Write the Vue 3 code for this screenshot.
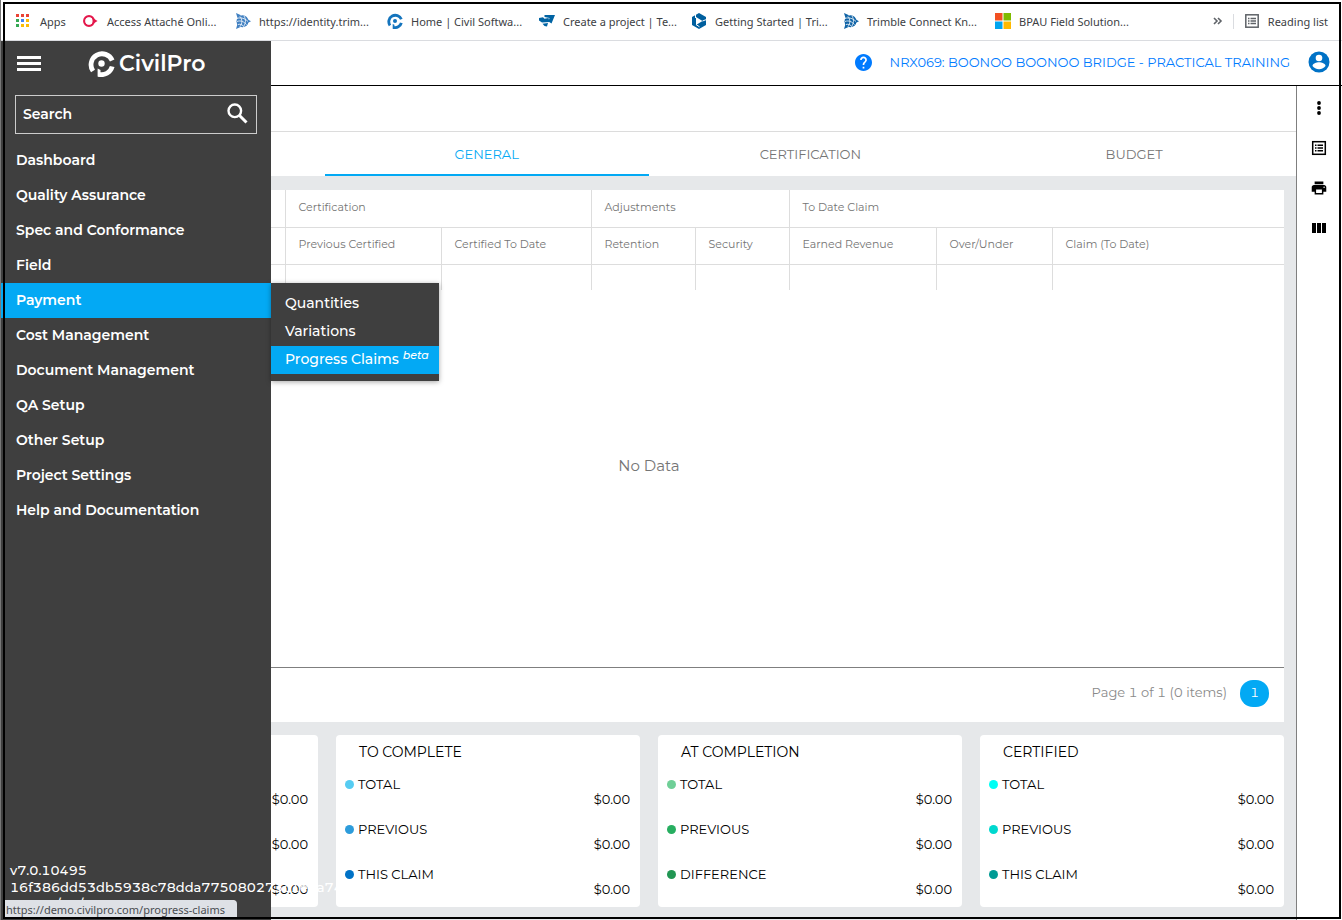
<script setup>
import { ref } from 'vue'

const bookmarks = [
  { icon: 'apps', text: 'Apps' },
  { icon: 'attache', text: 'Access Attaché Onli...' },
  { icon: 'globe', text: 'https://identity.trim...', color: '#3f7fc1' },
  { icon: 'civil', text: 'Home | Civil Softwa...' },
  { icon: 'tekla', text: 'Create a project | Te...' },
  { icon: 'connect', text: 'Getting Started | Tri...' },
  { icon: 'globe', text: 'Trimble Connect Kn...', color: '#0f63a6' },
  { icon: 'windows', text: 'BPAU Field Solution...' }
]
const appColors = ['#ea4335', '#ea4335', '#ea4335', '#34a853', '#4285f4', '#fbbc05', '#34a853', '#fbbc05', '#fbbc05']

const menu = [
  'Dashboard', 'Quality Assurance', 'Spec and Conformance', 'Field', 'Payment', 'Cost Management',
  'Document Management', 'QA Setup', 'Other Setup', 'Project Settings', 'Help and Documentation'
]
const submenu = [
  { text: 'Quantities' },
  { text: 'Variations' },
  { text: 'Progress Claims', badge: 'beta', active: true }
]
const tabs = ['GENERAL', 'CERTIFICATION', 'BUDGET']
const activeTab = ref('GENERAL')
const search = ref('')

const groups = [
  { text: 'Certification', span: 2 },
  { text: 'Adjustments', span: 2 },
  { text: 'To Date Claim', span: 3 }
]
const columns = ['Previous Certified', 'Certified To Date', 'Retention', 'Security', 'Earned Revenue', 'Over/Under', 'Claim (To Date)']

const cards = [
  { title: '', rows: [{ value: '$0.00' }, { value: '$0.00' }, { value: '$0.00' }] },
  {
    title: 'TO COMPLETE',
    rows: [
      { label: 'TOTAL', color: '#56ccf2', value: '$0.00' },
      { label: 'PREVIOUS', color: '#2d9cdb', value: '$0.00' },
      { label: 'THIS CLAIM', color: '#0072c6', value: '$0.00' }
    ]
  },
  {
    title: 'AT COMPLETION',
    rows: [
      { label: 'TOTAL', color: '#6fcf97', value: '$0.00' },
      { label: 'PREVIOUS', color: '#27ae60', value: '$0.00' },
      { label: 'DIFFERENCE', color: '#219653', value: '$0.00' }
    ]
  },
  {
    title: 'CERTIFIED',
    rows: [
      { label: 'TOTAL', color: '#00fff5', value: '$0.00' },
      { label: 'PREVIOUS', color: '#00d8cf', value: '$0.00' },
      { label: 'THIS CLAIM', color: '#009b95', value: '$0.00' }
    ]
  }
]
</script>

<template>
  <div class="app">
    <nav class="bookmarks" aria-label="Bookmarks">
      <a v-for="b in bookmarks" :key="b.text" href="#" class="bookmark" :class="{ apps: b.icon === 'apps' }">
        <svg v-if="b.icon === 'apps'" width="16" height="16" viewBox="0 0 16 16">
          <rect v-for="(c, i) in appColors" :key="i" :x="(i % 3) * 5" :y="1 + Math.floor(i / 3) * 5" width="3" height="3" :fill="c" />
        </svg>
        <svg v-else-if="b.icon === 'attache'" width="16" height="16" viewBox="0 0 16 16">
          <circle cx="6" cy="8" r="4.800" fill="none" stroke="#e4174b" stroke-width="2.300" />
          <path d="M9 4.500 14.500 8 9 11.500z" fill="#e4174b" />
          <circle cx="6" cy="8" r="3.600" fill="#fff" />
        </svg>
        <svg v-else-if="b.icon === 'globe'" width="16" height="16" viewBox="0 0 16 16">
          <path d="M1 0l5 2.300L2.500 5zM1 16l4.500-2L2.500 11zM12 6l4 2.300-4 2z" :fill="b.color" />
          <circle cx="7.500" cy="8.200" r="6" :fill="b.color" />
          <g fill="none" stroke="#fff" stroke-width=".8">
            <path d="M2 5.500c4-1.500 8 0 11 3M2 8.500c4-1.500 7 .3 9.500 3M3 11.500c2.500-.8 4.500.3 6 2.200" />
            <path d="M5 3.500c2.500 3 2.500 7 0 10M9 3c2 3 2 7.500-.5 10.500" />
          </g>
        </svg>
        <svg v-else-if="b.icon === 'civil'" width="16" height="16" viewBox="0 0 27 27">
          <g fill="none" stroke="#1474bd" stroke-width="4.800">
            <path d="M5 21A11 11 0 1 1 24.200 10.500" />
            <path d="M24.200 16.500A11 11 0 0 1 10.500 24.200" />
          </g>
          <path d="M9.600 18.500 12.500 20v7l-2.900-.6z" fill="#1474bd" />
          <circle cx="13.500" cy="13.500" r="3.400" fill="#1474bd" />
        </svg>
        <svg v-else-if="b.icon === 'tekla'" width="16" height="16" viewBox="0 0 16 16" fill="#0063a3">
          <path d="M5.500 2H16l-3.500 8.500L9.500 8.500l1-3.500-5-1z" />
          <path d="M0 5l4-.8 1.500 1.600 4-.8 1 4L3 9.500 0 7.500z" />
          <path d="M3.500 10.700l5.500-.7-1 3.500-2.500-.5z" />
        </svg>
        <svg v-else-if="b.icon === 'connect'" width="16" height="16" viewBox="0 0 16 16">
          <path d="M8 0l7 4v8l-7 4-7-4V4z" fill="#005f9e" />
          <path d="M5 4 11.500 8 5 12z" fill="#fff" />
          <path d="M4.500 1v4M5 11.500l3.500 2.300M15.500 6.500l-4 1.500" stroke="#fff" stroke-width="1" />
        </svg>
        <svg v-else width="16" height="16" viewBox="0 0 16 16">
          <path d="M0 0h7.500v7.500H0z" fill="#f25022" />
          <path d="M8.500 0H16v7.500H8.500z" fill="#7fba00" />
          <path d="M0 8.500h7.500V16H0z" fill="#00a4ef" />
          <path d="M8.500 8.500H16V16H8.500z" fill="#ffb900" />
        </svg>
        <span>{{ b.text }}</span>
      </a>
      <span class="bar-end">
        <button class="icon-button" aria-label="More bookmarks">
          <svg width="10" height="8" viewBox="0 0 10 8" fill="none" stroke="#5f6368" stroke-width="1.600"><path d="M1 1l3 3-3 3M5 1l3 3-3 3" /></svg>
        </button>
        <a href="#" class="reading">
          <svg width="14" height="14" viewBox="0 0 14 14" fill="none" stroke="#5f6368">
            <rect x=".8" y=".8" width="12.400" height="12.400" stroke-width="1.500" />
            <path d="M3 4.500h1.500M3 7h1.500M3 9.500h1.500M5.500 4.500H11M5.500 7H11M5.500 9.500H11" stroke-width="1.300" />
          </svg>
          <span>Reading list</span>
        </a>
      </span>
    </nav>

    <div class="page">
      <header class="topbar">
        <button class="icon-button" aria-label="Help">
          <svg width="17" height="17" viewBox="2 2 20 20" fill="#007bff">
            <path d="M12 2C6.480 2 2 6.480 2 12s4.480 10 10 10 10-4.480 10-10S17.520 2 12 2zm1 17h-2v-2h2v2zm2.070-7.750l-.9.920C13.450 12.900 13 13.500 13 15h-2v-.5c0-1.100.45-2.100 1.170-2.830l1.240-1.260c.37-.36.59-.86.59-1.410 0-1.100-.9-2-2-2s-2 .9-2 2H8c0-2.210 1.790-4 4-4s4 1.790 4 4c0 .88-.36 1.680-.93 2.250z" />
          </svg>
        </button>
        <a href="#" class="project">NRX069: BOONOO BOONOO BRIDGE - PRACTICAL TRAINING</a>
        <button class="icon-button" aria-label="Account">
          <svg width="22" height="22" viewBox="0 0 22 22">
            <circle cx="11" cy="11" r="10.500" fill="#0072c6" />
            <circle cx="11" cy="7" r="3.300" fill="#fff" />
            <path d="M4.500 15c0-2.600 4-3.700 6.500-3.700s6.500 1.100 6.500 3.700c-1.300 2-3.700 3.200-6.500 3.200S5.800 17 4.500 15z" fill="#fff" />
          </svg>
        </button>
      </header>

      <div class="workspace">
        <main class="main">
          <div class="toolbar"></div>
          <div class="tabs" role="tablist">
            <button v-for="t in tabs" :key="t" role="tab" class="tab" :class="{ active: t === activeTab }" :aria-selected="t === activeTab" @click="activeTab = t">{{ t }}</button>
          </div>

          <div class="content">
            <section class="grid">
              <table>
                <colgroup>
                  <col class="w271"><col class="w156"><col class="w150"><col class="w104"><col class="w94"><col class="w147"><col class="w116"><col>
                </colgroup>
                <thead>
                  <tr>
                    <td></td>
                    <th v-for="g in groups" :key="g.text" :colspan="g.span" scope="colgroup">{{ g.text }}</th>
                  </tr>
                  <tr>
                    <td></td>
                    <th v-for="c in columns" :key="c" scope="col">{{ c }}</th>
                  </tr>
                </thead>
                <tbody>
                  <tr><td v-for="n in 8" :key="n"></td></tr>
                </tbody>
              </table>
              <p class="empty">No Data</p>
              <footer class="pager">
                <span>Page 1 of 1 (0 items)</span>
                <button class="page-number">1</button>
              </footer>
            </section>

            <section class="cards">
              <article v-for="(card, i) in cards" :key="i" class="card">
                <h2>{{ card.title }}</h2>
                <dl>
                  <div v-for="(r, j) in card.rows" :key="j">
                    <dt><template v-if="r.label"><i :style="{ background: r.color }"></i>{{ r.label }}</template></dt>
                    <dd>{{ r.value }}</dd>
                  </div>
                </dl>
              </article>
            </section>
          </div>
        </main>

        <aside class="rail">
          <button class="icon-button" aria-label="More actions">
            <svg width="16" height="16" viewBox="0 0 16 16"><circle cx="8" cy="3" r="1.900" /><circle cx="8" cy="8" r="1.900" /><circle cx="8" cy="13" r="1.900" /></svg>
          </button>
          <button class="icon-button" aria-label="Details">
            <svg width="16" height="16" viewBox="0 0 16 16" fill="none" stroke="#000">
              <rect x="1.700" y="1.700" width="12.600" height="12.600" stroke-width="1.500" />
              <path d="M4 5.300h1.500M4 8h1.500M4 10.700h1.500M6.500 5.300H12M6.500 8H12M6.500 10.700H12" stroke-width="1.400" />
            </svg>
          </button>
          <button class="icon-button" aria-label="Print">
            <svg width="16" height="16" viewBox="1 1 22 22"><path d="M19 8H5c-1.660 0-3 1.340-3 3v6h4v4h12v-4h4v-6c0-1.660-1.340-3-3-3zm-3 11H8v-5h8v5zm3-7c-.55 0-1-.45-1-1s.45-1 1-1 1 .45 1 1-.45 1-1 1zm-1-9H6v4h12V3z" /></svg>
          </button>
          <button class="icon-button" aria-label="Columns">
            <svg width="16" height="16" viewBox="0 0 16 16"><path d="M1 3h4v10H1zM6 3h4v10H6zM11 3h4v10h-4z" /></svg>
          </button>
        </aside>
      </div>

      <aside class="sidebar">
        <div class="brand-row">
          <button class="icon-button" aria-label="Toggle menu">
            <svg width="24" height="16" viewBox="0 0 24 16" fill="#fff"><path d="M0 0h24v3H0zM0 6h24v3H0zM0 12h24v3H0z" /></svg>
          </button>
          <a href="#" class="brand">
            <svg width="27" height="27" viewBox="0 0 27 27" fill="#fff">
              <g fill="none" stroke="#fff" stroke-width="4.800">
                <path d="M5 21A11 11 0 1 1 24.200 10.500" />
                <path d="M24.200 16.500A11 11 0 0 1 10.500 24.200" />
              </g>
              <path d="M9.600 18.500 12.500 20v7l-2.900-.6z" />
              <circle cx="13.500" cy="13.500" r="3.200" />
            </svg>
            <span>CivilPro</span>
          </a>
        </div>
        <label class="search">
          <input v-model="search" type="text" placeholder="Search" aria-label="Search">
          <svg width="21" height="21" viewBox="0 0 21 21" fill="none" stroke="#fff"><circle cx="7.800" cy="7.800" r="6.300" stroke-width="2.400" /><path d="M12.500 12.500l7 7" stroke-width="3" /></svg>
        </label>
        <ul class="menu">
          <li v-for="m in menu" :key="m">
            <a href="#" :class="{ active: m === 'Payment' }">{{ m }}</a>
            <ul v-if="m === 'Payment'" class="submenu">
              <li v-for="s in submenu" :key="s.text">
                <a href="#" :class="{ active: s.active }">{{ s.text }} <em v-if="s.badge">{{ s.badge }}</em></a>
              </li>
            </ul>
          </li>
        </ul>
        <div class="version">
          <div>v7.0.10495</div>
          <div>16f386dd53db5938c78dda775080273c1e0a74</div>
          <div>Tue 09/30/2021 10:07:57.05 UTC</div>
        </div>
      </aside>
    </div>

    <div class="status">https://demo.civilpro.com/progress-claims</div>
    <div class="frame"></div>
  </div>
</template>

<style>
body { margin: 0; background: #fff; }
</style>

<style scoped>
* { box-sizing: border-box; }
.app {
  display: flex;
  flex-direction: column;
  min-height: 100vh;
  position: relative;
  overflow: hidden;
  border-left: 1px solid #777;
  font-family: Montserrat, Inter, "Liberation Sans", sans-serif;
  font-size: 13px;
  color: #000;
}
a { color: inherit; text-decoration: none; }
svg { display: block; flex: none; }
ul, dl, dd, h2, p { margin: 0; padding: 0; }
ul { list-style: none; }
button { font: inherit; color: inherit; border: 0; background: none; padding: 0; cursor: pointer; }
.icon-button { display: grid; place-items: center; }

.bookmarks {
  display: flex;
  align-items: center;
  height: 41px;
  padding: 3px 14px 1px 15px;
  border-bottom: 1px solid #dadce0;
  font-family: "Noto Sans", "Open Sans", sans-serif;
  font-size: 11px;
  color: #3c4043;
  white-space: nowrap;
}
.bookmark { display: flex; align-items: center; gap: 8px; flex: 0 0 152px; }
.bookmark.apps { flex-basis: 67px; }
.bar-end { display: flex; align-items: center; gap: 10px; margin-left: auto; }
.reading { display: flex; align-items: center; gap: 9px; padding-left: 11px; border-left: 1px solid #dadce0; }

.page { flex: 1; display: flex; flex-direction: column; position: relative; }
.topbar {
  display: flex;
  align-items: center;
  justify-content: flex-end;
  gap: 18px;
  height: 45px;
  padding: 0 12px 2px;
  border-bottom: 1px solid #000;
  color: #007bff;
}
.workspace { flex: 1; display: flex; }
.main { flex: 1; min-width: 0; display: flex; flex-direction: column; }
.rail {
  width: 46px;
  border-left: 1px solid #7f7f7f;
  padding: 14px 1px 0 0;
  display: flex;
  flex-direction: column;
  align-items: center;
  gap: 24px;
}
.toolbar { height: 46px; border-bottom: 1px solid #dcdcdc; }
.tabs { display: grid; grid-template-columns: repeat(4, 1fr); }
.tab { height: 44px; padding-top: 2px; border-bottom: 2px solid transparent; color: #757575; }
.tab:first-child { grid-column-start: 2; }
.tab.active { color: #03a9f4; border-color: #03a9f4; }

.content { flex: 1; display: flex; flex-direction: column; gap: 13px; padding: 14px 12px 13px 13px; background: #e6e8ea; }
.grid { flex: 1; display: flex; flex-direction: column; background: #fff; }
table { width: 100%; table-layout: fixed; border-collapse: collapse; font-size: 11px; }
.w271 { width: 271px; }
.w156 { width: 156px; }
.w150 { width: 150px; }
.w104 { width: 104px; }
.w94 { width: 94px; }
.w147 { width: 147px; }
.w116 { width: 116px; }
th, td { padding: 0 0 0 13px; border-right: 1px solid #ddd; text-align: left; font-weight: 400; color: #757575; }
th:last-child, td:last-child { border-right: 0; }
thead tr { height: 37px; border-bottom: 1px solid #ddd; }
th { padding-bottom: 3px; }
tbody tr { height: 26px; }
.empty { flex: 1; display: grid; place-items: center; padding-bottom: 26px; font-size: 15px; color: #757575; }
.pager {
  display: flex;
  align-items: center;
  justify-content: flex-end;
  gap: 13px;
  height: 55px;
  padding: 0 15px 3px;
  border-top: 1px solid #7f7f7f;
  color: #8a8a8a;
  font-variant-numeric: tabular-nums;
}
.pager span { padding-bottom: 3px; }
.page-number { width: 29px; height: 27px; padding-bottom: 3px; border-radius: 13px; background: #03a9f4; color: #fff; }

.cards { display: grid; grid-template-columns: repeat(4, 1fr); gap: 18px; }
.card { background: #fff; border-radius: 4px; padding: 8px 10px 10px 9px; }
h2 { height: 18px; padding-left: 14px; font-size: 14px; line-height: 18px; font-weight: 400; }
dl { display: grid; gap: 15px; margin-top: 16px; line-height: 15px; }
dt { display: flex; align-items: center; gap: 4px; height: 15px; }
dt i { width: 9px; height: 9px; border-radius: 50%; }
dd { text-align: right; }

.sidebar {
  position: absolute;
  inset: 0 auto 0 0;
  width: 270px;
  display: flex;
  flex-direction: column;
  background: #3f3f3f;
  color: #fff;
  font-size: 14px;
  font-weight: 600;
}
.brand-row { display: flex; align-items: center; gap: 47px; height: 45px; padding-left: 16px; }
.brand { display: flex; align-items: center; gap: 4px; font-size: 22px; font-weight: 600; }
.search {
  display: flex;
  align-items: center;
  height: 39px;
  margin: 9px 14px;
  padding: 0 8px 2px 7px;
  border: 1px solid #ccc;
}
.search input { flex: 1; min-width: 0; border: 0; padding: 0; outline: 0; background: none; color: #fff; font: inherit; }
.search input::placeholder { color: #fff; opacity: 1; }
.menu > li { position: relative; }
.menu > li > a { display: block; height: 35px; padding-left: 15px; line-height: 34px; }
.menu .active { background: #03a9f4; }
.submenu {
  position: absolute;
  left: 100%;
  top: 0;
  padding: 7px 0;
  background: #3f3f3f;
  box-shadow: 0 1px 5px rgba(0, 0, 0, .35);
  font-weight: 500;
  white-space: nowrap;
}
.submenu a { display: block; height: 28px; padding: 0 10px 0 14px; line-height: 26px; }
.submenu em { font-size: 11px; line-height: 1; vertical-align: 5px; }
.version {
  margin-top: auto;
  padding: 0 0 7px 9px;
  font-size: 13px;
  font-weight: 500;
  line-height: 17px;
  font-variant-numeric: tabular-nums;
  white-space: nowrap;
}

/* Link preview and window outline lie over the page. */
.status {
  position: absolute;
  left: 2px;
  bottom: 1px;
  height: 19px;
  padding: 0 12px 0 3px;
  border-radius: 0 4px 0 0;
  background: #dee1e6;
  color: #4a4d51;
  font-family: "Noto Sans", "Open Sans", sans-serif;
  font-size: 11px;
  line-height: 19px;
}
.frame { position: absolute; inset: 2px 1px 1px 2px; border: 2px solid #000; pointer-events: none; }
</style>
